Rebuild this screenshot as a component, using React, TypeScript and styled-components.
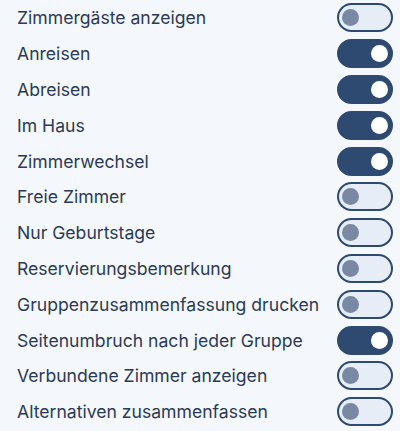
import styled, { createGlobalStyle } from "styled-components";
import { useState } from "react";

const GlobalStyle = createGlobalStyle`
  body {
    margin: 0;
    background: #f4f7fb;
    font-family: Inter, "Noto Sans", sans-serif;
  }
`;

const List = styled.div`
  display: flex;
  flex-direction: column;
  padding: 0 7px 0 17px;
`;

const Row = styled.label`
  display: flex;
  align-items: center;
  justify-content: space-between;
  height: 35.8px;
  cursor: pointer;
`;

const Label = styled.span`
  font-size: 17.6px;
  color: #2b3a55;
`;

const Track = styled.span<{ $on: boolean }>`
  position: relative;
  box-sizing: border-box;
  width: 56px;
  height: 29px;
  border-radius: 15px;
  border: 2px solid #2e4a70;
  background: ${(p) => (p.$on ? "#2e4a70" : "#e6edf7")};
  flex-shrink: 0;
`;

const Knob = styled.span<{ $on: boolean }>`
  position: absolute;
  top: 4px;
  left: ${(p) => (p.$on ? "32px" : "3px")};
  width: 17px;
  height: 17px;
  border-radius: 50%;
  background: ${(p) => (p.$on ? "#ffffff" : "#7a89a3")};
`;

const options: [string, boolean][] = [
  ["Zimmergäste anzeigen", false],
  ["Anreisen", true],
  ["Abreisen", true],
  ["Im Haus", true],
  ["Zimmerwechsel", true],
  ["Freie Zimmer", false],
  ["Nur Geburtstage", false],
  ["Reservierungsbemerkung", false],
  ["Gruppenzusammenfassung drucken", false],
  ["Seitenumbruch nach jeder Gruppe", true],
  ["Verbundene Zimmer anzeigen", false],
  ["Alternativen zusammenfassen", false],
];

function Toggle({ on, onClick }: { on: boolean; onClick: () => void }) {
  return (
    <Track $on={on} onClick={onClick} role="switch" aria-checked={on}>
      <Knob $on={on} />
    </Track>
  );
}

export default function App() {
  const [values, setValues] = useState(options.map((o) => o[1]));

  const flip = (i: number) =>
    setValues((v) => v.map((x, j) => (j === i ? !x : x)));

  return (
    <>
      <GlobalStyle />
      <List>
        {options.map(([text], i) => (
          <Row key={text}>
            <Label>{text}</Label>
            <Toggle on={values[i]} onClick={() => flip(i)} />
          </Row>
        ))}
      </List>
    </>
  );
}
